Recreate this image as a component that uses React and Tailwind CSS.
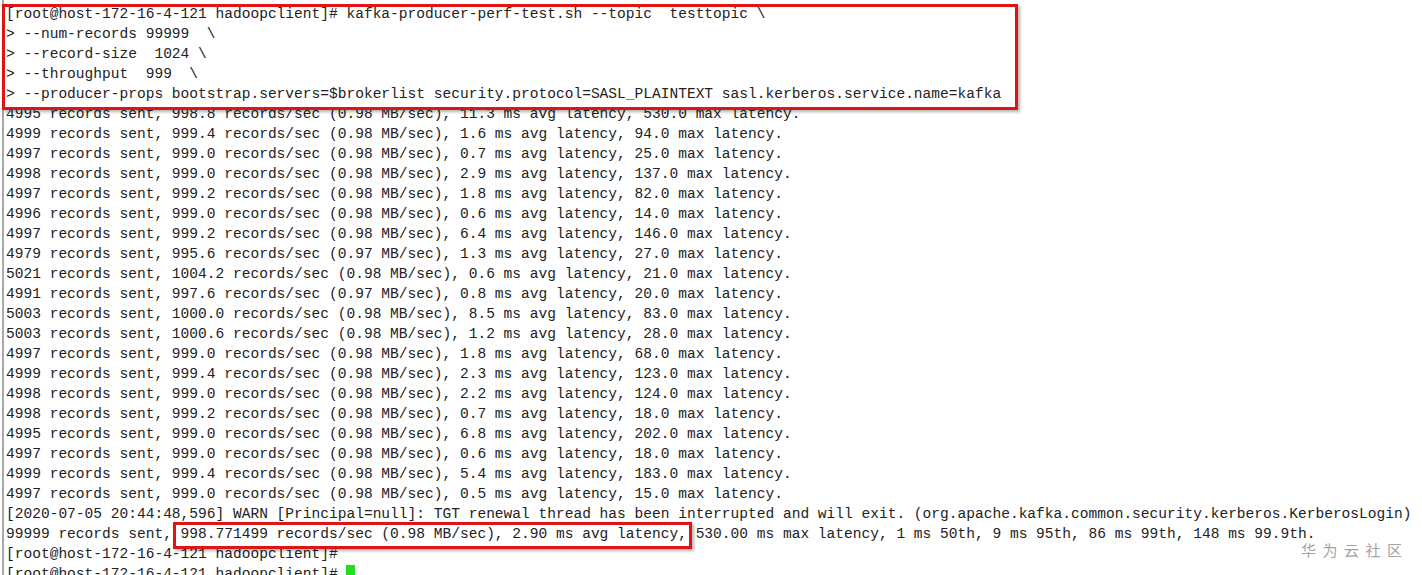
import React from "react";

const cmd = [
  "[root@host-172-16-4-121 hadoopclient]# kafka-producer-perf-test.sh --topic  testtopic \\",
  "> --num-records 99999  \\",
  "> --record-size  1024 \\",
  "> --throughput  999  \\",
  "> --producer-props bootstrap.servers=$brokerlist security.protocol=SASL_PLAINTEXT sasl.kerberos.service.name=kafka",
];

const data = [
  "4995 records sent, 998.8 records/sec (0.98 MB/sec), 11.3 ms avg latency, 530.0 max latency.",
  "4999 records sent, 999.4 records/sec (0.98 MB/sec), 1.6 ms avg latency, 94.0 max latency.",
  "4997 records sent, 999.0 records/sec (0.98 MB/sec), 0.7 ms avg latency, 25.0 max latency.",
  "4998 records sent, 999.0 records/sec (0.98 MB/sec), 2.9 ms avg latency, 137.0 max latency.",
  "4997 records sent, 999.2 records/sec (0.98 MB/sec), 1.8 ms avg latency, 82.0 max latency.",
  "4996 records sent, 999.0 records/sec (0.98 MB/sec), 0.6 ms avg latency, 14.0 max latency.",
  "4997 records sent, 999.2 records/sec (0.98 MB/sec), 6.4 ms avg latency, 146.0 max latency.",
  "4979 records sent, 995.6 records/sec (0.97 MB/sec), 1.3 ms avg latency, 27.0 max latency.",
  "5021 records sent, 1004.2 records/sec (0.98 MB/sec), 0.6 ms avg latency, 21.0 max latency.",
  "4991 records sent, 997.6 records/sec (0.97 MB/sec), 0.8 ms avg latency, 20.0 max latency.",
  "5003 records sent, 1000.0 records/sec (0.98 MB/sec), 8.5 ms avg latency, 83.0 max latency.",
  "5003 records sent, 1000.6 records/sec (0.98 MB/sec), 1.2 ms avg latency, 28.0 max latency.",
  "4997 records sent, 999.0 records/sec (0.98 MB/sec), 1.8 ms avg latency, 68.0 max latency.",
  "4999 records sent, 999.4 records/sec (0.98 MB/sec), 2.3 ms avg latency, 123.0 max latency.",
  "4998 records sent, 999.0 records/sec (0.98 MB/sec), 2.2 ms avg latency, 124.0 max latency.",
  "4998 records sent, 999.2 records/sec (0.98 MB/sec), 0.7 ms avg latency, 18.0 max latency.",
  "4995 records sent, 999.0 records/sec (0.98 MB/sec), 6.8 ms avg latency, 202.0 max latency.",
  "4997 records sent, 999.0 records/sec (0.98 MB/sec), 0.6 ms avg latency, 18.0 max latency.",
  "4999 records sent, 999.4 records/sec (0.98 MB/sec), 5.4 ms avg latency, 183.0 max latency.",
  "4997 records sent, 999.0 records/sec (0.98 MB/sec), 0.5 ms avg latency, 15.0 max latency.",
  "[2020-07-05 20:44:48,596] WARN [Principal=null]: TGT renewal thread has been interrupted and will exit. (org.apache.kafka.common.security.kerberos.KerberosLogin)",
  "99999 records sent, 998.771499 records/sec (0.98 MB/sec), 2.90 ms avg latency, 530.00 ms max latency, 1 ms 50th, 9 ms 95th, 86 ms 99th, 148 ms 99.9th.",
  "[root@host-172-16-4-121 hadoopclient]#",
];

export default function App() {
  return (
    <div className="relative w-[1422px] h-[575px] overflow-hidden bg-white">
      <div className="h-full pl-[2px]">
        <div className="h-full border-l-2 border-[#a9a9a9] pl-[2px] pt-[4px] font-['Liberation_Mono','Courier_New',monospace] text-[14.55px] leading-[20px] text-[#222222] whitespace-pre">
          {[...cmd, ...data].map((l, i) => (
            <div key={i} className="h-[20px]">{l}</div>
          ))}
          <div className="h-[20px]">
            {"[root@host-172-16-4-121 hadoopclient]# "}
            <span className="inline-block w-[9px] h-[16px] bg-[#1ee11e] align-[-3px]" />
          </div>
        </div>
      </div>

      <div className="absolute left-[2px] top-[4px] w-[1016px] h-[106px] border-[3px] border-[#e01414] shadow-[2px_2px_3px_rgba(0,0,0,0.3)]" />
      <div className="absolute left-[173px] top-[522px] w-[519px] h-[27px] border-[3px] border-[#e01414] shadow-[2px_2px_3px_rgba(0,0,0,0.3)]" />

      <div className="absolute left-[1301px] top-[540px] text-[15px] leading-[20px] tracking-[6.5px] text-[#a3a3a3] font-['Noto_Sans_CJK_SC',sans-serif]">
        华为云社区
      </div>
    </div>
  );
}
